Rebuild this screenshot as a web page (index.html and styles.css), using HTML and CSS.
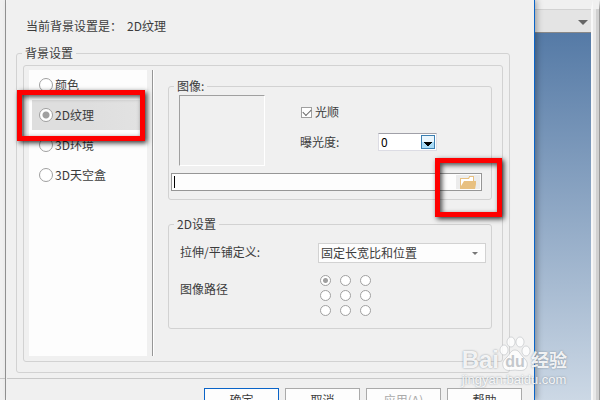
FILE: index.html
```html
<!DOCTYPE html>
<html lang="zh-CN">

<head>
    <meta charset="UTF-8">
    <meta name="viewport" content="width=device-width, initial-scale=1.0">
    <title>背景设置</title>
    <link rel="stylesheet" href="styles.css">
</head>

<body>
    <div class="window">
        <div class="edge"><div class="edge-foot"></div></div>

        <form class="dialog">
            <div class="content">
                <p class="current">当前背景设置是：<span>2D纹理</span></p>

                <fieldset class="group outer">
                    <legend>背景设置</legend>
                    <div class="panel">
                        <div class="types">
                            <label class="type"><input type="radio" name="type" class="radio">颜色</label>
                            <label class="type selected"><input type="radio" name="type" class="radio" checked>2D纹理<span class="mark mark-type"></span></label>
                            <label class="type"><input type="radio" name="type" class="radio">3D环境</label>
                            <label class="type"><input type="radio" name="type" class="radio">3D天空盒</label>
                        </div>

                        <div class="settings">
                            <fieldset class="group image">
                                <legend>图像:</legend>
                                <div class="image-top">
                                    <div class="preview"></div>
                                    <div class="options">
                                        <label class="smooth"><input type="checkbox" class="check" checked>光顺</label>
                                        <div class="exposure">
                                            <label for="exposure">曝光度:</label>
                                            <div class="spin">
                                                <input type="text" id="exposure" value="0">
                                                <button type="button" class="spin-button" aria-label="曝光度选项">
                                                    <svg width="8" height="4" viewBox="0 0 8 4"><path d="M0 0h8v1H7v1H6v1H5v1H3V3H2V2H1V1H0z" fill="#000"/></svg>
                                                </button>
                                            </div>
                                        </div>
                                    </div>
                                </div>
                                <div class="file">
                                    <span class="caret"></span>
                                    <input type="text" aria-label="图像">
                                    <div class="browse-wrap">
                                        <button type="button" class="browse" aria-label="浏览">
                                            <svg width="16" height="13" viewBox="0 0 16 13">
                                                <path d="M0 13V2h8l1-1V0h5v5h2v3l-1 5z" fill="#e8c080"/>
                                                <path d="M1 10V3h8l1-2h3v4H4z" fill="#fff"/>
                                            </svg>
                                        </button>
                                        <span class="mark mark-browse"></span>
                                    </div>
                                </div>
                            </fieldset>

                            <fieldset class="group texture">
                                <legend>2D设置</legend>
                                <div class="row">
                                    <label for="stretch">拉伸/平铺定义:</label>
                                    <div class="select">
                                        <select id="stretch"><option>固定长宽比和位置</option></select>
                                        <svg width="6" height="3" viewBox="0 0 6 3"><path d="M0 0h6L3 3z" fill="#777"/></svg>
                                    </div>
                                </div>
                                <div class="row path-row">
                                    <span class="path-label">图像路径</span>
                                    <div class="anchors">
                                        <input type="radio" name="anchor" class="radio" aria-label="左上" checked>
                                        <input type="radio" name="anchor" class="radio" aria-label="上">
                                        <input type="radio" name="anchor" class="radio" aria-label="右上">
                                        <input type="radio" name="anchor" class="radio" aria-label="左">
                                        <input type="radio" name="anchor" class="radio" aria-label="中">
                                        <input type="radio" name="anchor" class="radio" aria-label="右">
                                        <input type="radio" name="anchor" class="radio" aria-label="左下">
                                        <input type="radio" name="anchor" class="radio" aria-label="下">
                                        <input type="radio" name="anchor" class="radio" aria-label="右下">
                                    </div>
                                </div>
                            </fieldset>
                        </div>
                    </div>
                </fieldset>
            </div>

            <div class="buttons">
                <button type="submit" class="primary">确定</button>
                <button type="button">取消</button>
                <button type="button" disabled>应用(A)</button>
                <button type="button">帮助</button>
            </div>
        </form>

        <div class="viewport">
            <div class="toolbar">
                <svg width="10" height="5" viewBox="0 0 10 5"><path d="M0 0h10L5 5z" fill="#666"/></svg>
            </div>
            <div class="canvas"></div>
        </div>
        <div class="scroll"></div>
    </div>

    <div class="watermark">
        <div class="brand">
            <span class="bai">Bai</span>
            <svg width="32" height="36" viewBox="0 0 32 36">
                <g class="paw">
                    <ellipse cx="5" cy="14" rx="4" ry="5"/>
                    <ellipse cx="12" cy="6" rx="4" ry="5"/>
                    <ellipse cx="21" cy="6" rx="4" ry="5"/>
                    <ellipse cx="27" cy="15" rx="4" ry="5"/>
                    <path d="M16 14c-4 0-5 4-8 7-3 3-5 5-4 9 1 5 6 5 12 4 6 1 11 1 12-4 1-4-1-6-4-9-3-3-4-7-8-7z"/>
                </g>
                <text x="16" y="31" class="du">du</text>
            </svg>
            <span class="jingyan">经验</span>
        </div>
        <div class="url">jingyan.baidu.com</div>
    </div>
</body>

</html>
```
FILE: styles.css
```css
* {
    box-sizing: border-box;
}

body {
    margin: 0;
    overflow: hidden;
    background: #f0f0f0;
    color: #3c3c3c;
    font-family: "Noto Sans CJK SC", sans-serif;
    font-size: 12px;
    line-height: 18px;
}

input, button, select {
    font: inherit;
    color: inherit;
    margin: 0;
    padding: 0;
    outline: none;
}

svg {
    display: block;
}

.window {
    display: flex;
    height: 100vh;
    overflow: hidden;
}

.edge {
    display: flex;
    flex: 0 0 7px;
    border-right: 1px solid #fff;
    box-shadow: inset -1px 0 #969696;
}

.edge-foot {
    width: 5px;
    height: 379px;
    border-bottom: 1px solid #c8c8c8;
}

/* dialog */
.dialog {
    flex: 1;
    min-width: 0;
    border-right: 1px solid #0a64c8;
    position: relative;
    z-index: 1;
    box-shadow: 2px 0 6px rgba(0, 0, 0, 0.3);
    background: #f0f0f0;
}

.content {
    padding: 17px 24px 5px 9px;
    border-bottom: 1px solid #c8c8c8;
}

.current {
    margin: 0 0 9px;
    padding-left: 10px;
}

.current span {
    margin-left: 5px;
}

.group {
    margin: 0;
    min-width: 0;
    border: 1px solid #d2d2d2;
    border-radius: 3px;
}

.group legend {
    padding: 0 3px;
}

.outer {
    padding: 3px 6px 10px;
}

.outer > legend {
    margin-left: -1px;
}

.panel {
    display: flex;
    padding: 4px 10px 5px 5px;
    border: 1px solid #d2d2d2;
    border-radius: 3px;
}

.types {
    flex: 0 0 118px;
    padding: 0 6px 0 3px;
    background: #fdfdfd;
}

.type {
    display: flex;
    align-items: center;
    height: 30px;
    padding-left: 7px;
    gap: 2px;
    position: relative;
}

.selected {
    background: linear-gradient(90deg, #dedede 50%, #e2e2e2);
}

.radio {
    appearance: none;
    width: 14px;
    height: 14px;
    border: 1px solid #a0a0a0;
    border-radius: 50%;
    background: #fff;
}

.radio:checked {
    background: radial-gradient(circle, #a0a0a0 3px, #fff 4px);
}

/* red markers */
.mark {
    position: absolute;
    z-index: 2;
    border: 5px solid #fe0000;
    box-shadow: 2px 2px 5px rgba(0, 0, 0, 0.8), inset 2px 2px 5px rgba(0, 0, 0, 0.7);
    pointer-events: none;
}

.mark-type {
    inset: -10px -4px -11px -15px;
}

.mark-browse {
    inset: -17px -22px -28px -21px;
}

.settings {
    flex: 1;
    min-width: 0;
    margin-left: 5px;
    padding: 7px 0 27px 15px;
    border-left: 1px solid #969696;
    box-shadow: inset 1px 0 #fff;
}

.image {
    padding: 0 9px 8px 2px;
}

.image legend {
    margin-left: 3px;
}

.image-top {
    display: flex;
}

.preview {
    flex: 0 0 86px;
    height: 71px;
    margin-left: 8px;
    border: 1px solid;
    border-color: #a0a0a0 #fff #fff #a0a0a0;
}

.options {
    padding: 8px 0 0 35px;
}

.smooth {
    display: flex;
    align-items: center;
    gap: 3px;
    margin-left: 1px;
}

.check {
    appearance: none;
    width: 11px;
    height: 11px;
    border: 1px solid #a0a0a0;
    background: #fff;
}

.check:checked::before {
    content: "";
    display: block;
    width: 7px;
    height: 4px;
    margin: 1px;
    border: solid #666;
    border-width: 0 0 1px 1px;
    transform: rotate(-45deg);
}

.exposure {
    display: flex;
    align-items: center;
    margin-top: 12px;
}

.exposure label {
    width: 78px;
}

.spin {
    display: flex;
    align-items: center;
    width: 59px;
    height: 18px;
    padding: 1px;
    border: 1px solid #dcdce4;
    border-top-color: #a0a0a8;
    background: #fff;
}

.spin input {
    flex: 1;
    width: 0;
    border: 0;
    padding-left: 1px;
    background: none;
    color: #000;
}

.spin-button {
    display: flex;
    align-items: flex-end;
    justify-content: center;
    width: 14px;
    height: 14px;
    padding-bottom: 2px;
    border: 1px solid #3c7fb1;
    background: linear-gradient(#eaf6fd 50%, #a9dbf6 50%);
}

.file {
    display: flex;
    align-items: center;
    height: 18px;
    margin-top: 7px;
    padding-left: 2px;
    border: 1px solid #969696;
    background: #fdfdfd;
}

.caret {
    width: 1px;
    height: 12px;
    background: #000;
}

.file input {
    flex: 1;
    width: 0;
    height: 14px;
    border: 0;
    background: none;
}

.browse-wrap {
    position: relative;
    margin-right: 1px;
}

.browse {
    display: flex;
    justify-content: center;
    align-items: center;
    width: 24px;
    height: 14px;
    border: 0;
    background: #ececec;
}

.texture {
    margin-top: 15px;
    padding: 10px 5px 12px 11px;
}

.texture legend {
    margin-left: -6px;
}

.row {
    display: flex;
    align-items: flex-start;
}

.row > :first-child {
    width: 138px;
}

.select {
    display: flex;
    flex: 1;
    align-items: center;
    height: 20px;
    padding: 0 7px 0 2px;
    border: 1px solid #d2d2d2;
    background: #fdfdfd;
}

.select select {
    appearance: none;
    flex: 1;
    width: 0;
    border: 0;
    background: none;
}

.path-row {
    margin-top: 12px;
    align-items: center;
}

.path-label {
    padding-bottom: 14px;
}

.anchors {
    display: grid;
    grid-template-columns: repeat(3, 11px);
    gap: 4px 9px;
    margin-left: 2px;
}

.anchors .radio {
    width: 11px;
    height: 11px;
}

.anchors .radio:checked {
    background: radial-gradient(circle, #a0a0a0 2px, #fff 3px);
}

.buttons {
    display: flex;
    justify-content: flex-end;
    gap: 6px;
    padding: 9px 12px 0 0;
}

.buttons button {
    flex: 0 0 75px;
    height: 23px;
    border: 1px solid #aaa;
    background: #fdfdfd;
}

.buttons .primary {
    border-color: #0a64c8;
}

.buttons button:disabled {
    color: #aaa;
}

/* 3D view behind the dialog */
.viewport {
    display: flex;
    flex-direction: column;
    flex: 0 0 58px;
    border-top: 9px solid #f0f0f0;
    border-right: 2px solid #f8f8f8;
}

.toolbar {
    display: flex;
    align-items: center;
    justify-content: flex-end;
    height: 23px;
    padding: 3px 3px 0 0;
    border-top: 1px solid #d2d2d2;
    background: #e4e4e4;
}

.canvas {
    flex: 1;
    border-top: 1px solid #888;
    background: linear-gradient(#557aa6, #ccd8e5);
}

.scroll {
    flex: 0 0 7px;
    border-top: 9px solid #f0f0f0;
    border-right: 1px solid #999;
    background: linear-gradient(90deg, #e8e8e8 50%, #d0d0d0 50%);
}

.watermark {
    position: absolute;
    right: 33px;
    bottom: 13px;
    z-index: 3;
    color: rgba(255, 255, 255, 0.9);
    font-family: "Liberation Sans", "Noto Sans CJK SC", sans-serif;
    text-shadow: 0 0 2px rgba(110, 120, 130, 0.8);
}

.brand {
    display: flex;
    align-items: flex-end;
    height: 36px;
}

.bai {
    font-size: 24px;
    font-weight: bold;
    line-height: 24px;
}

.paw {
    fill: rgba(255, 255, 255, 0.8);
    stroke: rgba(160, 165, 170, 0.4);
}

.du {
    fill: #c4c8cc;
    font-size: 16px;
    font-weight: bold;
    text-anchor: middle;
    text-shadow: none;
}

.jingyan {
    font-size: 18px;
    font-weight: bold;
    line-height: 22px;
}

.url {
    font-size: 13px;
    line-height: 15px;
}
```
